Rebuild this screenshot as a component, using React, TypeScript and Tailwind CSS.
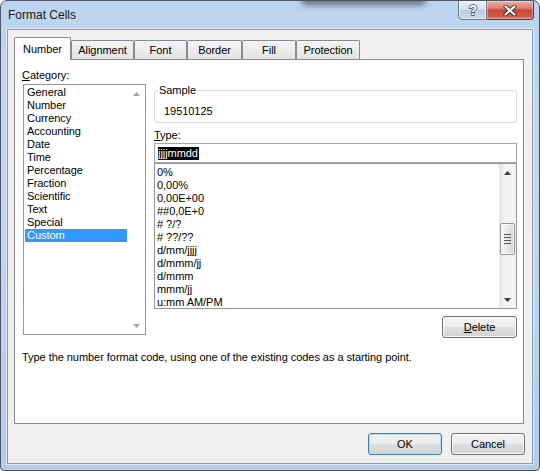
import React from "react";

const categories = [
  "General",
  "Number",
  "Currency",
  "Accounting",
  "Date",
  "Time",
  "Percentage",
  "Fraction",
  "Scientific",
  "Text",
  "Special",
  "Custom",
];

const formats = [
  "0%",
  "0,00%",
  "0,00E+00",
  "##0,0E+0",
  "# ?/?",
  "# ??/??",
  "d/mm/jjjj",
  "d/mmm/jj",
  "d/mmm",
  "mmm/jj",
  "u:mm AM/PM",
];

const tabs = [
  { label: "Alignment", cls: "w-[63px]" },
  { label: "Font", cls: "w-[53px]" },
  { label: "Border", cls: "w-[55px]" },
  { label: "Fill", cls: "w-[54px]" },
  { label: "Protection", cls: "w-[64px]" },
];

function Up({ c }: { c: string }) {
  return (
    <svg width="7" height="4" viewBox="0 0 7 4">
      <path d="M3.5 0L7 4H0z" fill={c} />
    </svg>
  );
}

function Down({ c }: { c: string }) {
  return (
    <svg width="7" height="4" viewBox="0 0 7 4">
      <path d="M0 0H7L3.5 4z" fill={c} />
    </svg>
  );
}

const btn =
  "flex items-center justify-center rounded-[3px] border bg-[linear-gradient(to_bottom,#f4f4f4_0%,#ececec_50%,#dfdfdf_50%,#d3d3d3_100%)]";

export default function App() {
  return (
    <div className="w-[540px] h-[471px] bg-white">
      <div className="relative w-[540px] h-[471px] overflow-hidden rounded-t-[7px] rounded-b-[4px] border border-[#4a5666] bg-[linear-gradient(to_bottom,#bcd4ee,#c4d9f1_40%,#b3cce8)] flex flex-col font-['Liberation_Sans',Arial,sans-serif] tracking-[-0.05px] text-[11px] leading-[13px] text-black">
        <div className="pointer-events-none absolute left-[300px] top-[-5px] w-[125px] h-[9px] rounded-full bg-[#2c2c2c] opacity-60 blur-[3px]" />

        {/* Title bar */}
        <div className="h-[28px] shrink-0 flex items-start">
          <div className="pl-[7px] pt-[7px] text-[12px] leading-[14px] tracking-[0px] text-[#1a1a1a]">
            Format Cells
          </div>
          <div className="ml-auto mr-[5px] -mt-px flex">
            <div className="w-[29px] h-[20px] rounded-bl-[4px] border border-[#6b7c91] bg-[linear-gradient(to_bottom,#e9f0f8_0%,#d6e2ef_45%,#bccde1_50%,#c8d8eb_100%)] shadow-[inset_0_0_0_1px_rgba(255,255,255,0.5)] flex items-center justify-center">
              <svg width="12" height="16" viewBox="0 0 12 16">
                <text
                  x="6"
                  y="13"
                  textAnchor="middle"
                  fontSize="14"
                  fontWeight="bold"
                  fontFamily="Liberation Sans, Arial, sans-serif"
                  fill="#ffffff"
                  stroke="#3b4a5e"
                  strokeWidth="1.4"
                  paintOrder="stroke"
                >
                  ?
                </text>
              </svg>
            </div>
            <div className="w-[47px] h-[20px] rounded-br-[4px] border border-l-0 border-[#5e2f2c] bg-[linear-gradient(to_bottom,#eab0a6_0%,#dc7f72_40%,#c7463a_50%,#cf5b49_85%,#e0866e_100%)] shadow-[inset_0_0_0_1px_rgba(255,255,255,0.35)] flex items-center justify-center">
              <svg width="14" height="11" viewBox="0 0 14 11">
                <path d="M2.5 1.5L11.5 9.5M11.5 1.5L2.5 9.5" stroke="#3a2a2a" strokeWidth="4" strokeLinecap="round" />
                <path d="M2.5 1.5L11.5 9.5M11.5 1.5L2.5 9.5" stroke="#ffffff" strokeWidth="2.2" strokeLinecap="round" />
              </svg>
            </div>
          </div>
        </div>

        {/* Client area */}
        <div className="mx-[6px] h-[435px] shrink-0 border border-[#8a9bb0] bg-[#f0f0f0] shadow-[0_0_0_1px_#dbe8f6] flex flex-col">
          {/* Tab strip */}
          <div className="h-[29px] shrink-0 flex items-end pl-[6px]">
            <div className="relative z-10 -mb-px w-[57px] h-[23px] rounded-t-[2px] border border-b-0 border-[#898c95] bg-white flex justify-center pt-[4px] leading-[14px]">
              Number
            </div>
            {tabs.map((t) => (
              <div
                key={t.label}
                className={`${t.cls} h-[19px] rounded-t-[2px] border border-b-0 border-[#898c95] bg-[linear-gradient(to_bottom,#f4f4f4,#e3e3e3)] flex justify-center pt-[2px] leading-[14px]`}
              >
                {t.label}
              </div>
            ))}
          </div>

          {/* Tab page */}
          <div className="ml-[6px] mr-[8px] h-[365px] shrink-0 border border-[#898c95] bg-white flex flex-col pl-[8px] pt-[8px]">
            <div className="flex gap-[8px]">
              {/* Category */}
              <div className="w-[123px] flex flex-col">
                <div className="leading-[14px] -ml-px">
                  <span className="underline">C</span>ategory:
                </div>
                <div className="mt-[2px] h-[251px] border border-[#979797] flex">
                  <div className="flex-1 pt-[1px] overflow-hidden">
                    {categories.map((c) => (
                      <div
                        key={c}
                        className={`mx-[1px] h-[13px] pl-[2px] leading-[13px] ${
                          c === "Custom" ? "bg-[#3399ff] text-white" : ""
                        }`}
                      >
                        {c}
                      </div>
                    ))}
                  </div>
                  <div className="w-[17px] flex flex-col justify-between">
                    <div className="h-[17px] flex items-center justify-center">
                      <Up c="#a6a6a6" />
                    </div>
                    <div className="h-[17px] flex items-center justify-center">
                      <Down c="#a6a6a6" />
                    </div>
                  </div>
                </div>
              </div>

              {/* Right column */}
              <div className="w-[363px] flex flex-col pt-[16px]">
                <fieldset className="m-0 h-[39px] min-w-0 rounded-[3px] border border-[#d5dfe5] p-0">
                  <legend className="ml-[3px] px-[1px] leading-[13px]">Sample</legend>
                  <div className="pt-[7px] pl-[9px] leading-[14px]">19510125</div>
                </fieldset>
                <div className="mt-[5px] leading-[14px]">
                  <span className="underline">T</span>ype:
                </div>
                <div className="mt-[1px] h-[20px] border border-[#a3a7ae] bg-white pl-[3px] flex items-center">
                  <span className="inline-block bg-black text-white leading-[13px] pr-px">jjjjmmdd</span>
                </div>
                <div className="h-[146px] border border-[#979797] flex">
                  <div className="flex-1 pt-[2px] pl-[2px] overflow-hidden">
                    {formats.map((f) => (
                      <div key={f} className="h-[13px] leading-[13px] whitespace-pre">
                        {f}
                      </div>
                    ))}
                  </div>
                  <div className="w-[17px] flex flex-col bg-[linear-gradient(to_right,#e4e4e4,#f3f3f3_35%,#f3f3f3)]">
                    <div className="h-[17px] shrink-0 flex items-center justify-center">
                      <Up c="#3a3a3a" />
                    </div>
                    <div className="flex-1">
                      <div className="mt-[42px] mx-[1px] h-[32px] rounded-[2px] border border-[#959595] bg-[linear-gradient(to_right,#f7f7f7,#e8e8e8_50%,#d5d5d5)] shadow-[inset_0_0_0_1px_rgba(255,255,255,0.7)] flex flex-col items-center justify-center gap-[2px]">
                        <div className="w-[7px] h-px bg-[#575757]" />
                        <div className="w-[7px] h-px bg-[#575757]" />
                        <div className="w-[7px] h-px bg-[#575757]" />
                        <div className="w-[7px] h-px bg-[#575757]" />
                      </div>
                    </div>
                    <div className="h-[17px] shrink-0 flex items-center justify-center">
                      <Down c="#3a3a3a" />
                    </div>
                  </div>
                </div>
                <div className="mt-[7px] flex justify-end">
                  <div className={`${btn} w-[75px] h-[22px] border-[#707070] shadow-[inset_0_0_0_1px_#fbfbfb]`}>
                    <span>
                      <span className="underline">D</span>elete
                    </span>
                  </div>
                </div>
              </div>
            </div>
            <div className="mt-[12px] -ml-px leading-[14px]">
              Type the number format code, using one of the existing codes as a starting point.
            </div>
          </div>

          {/* Dialog buttons */}
          <div className="mt-[9px] flex justify-end gap-[9px] pr-[7px]">
            <div className={`${btn} w-[74px] h-[22px] border-[#3c7fb1] shadow-[inset_0_0_0_1px_#b4dcf5]`}>OK</div>
            <div className={`${btn} w-[74px] h-[22px] border-[#707070] shadow-[inset_0_0_0_1px_#fbfbfb]`}>Cancel</div>
          </div>
        </div>
      </div>
    </div>
  );
}
